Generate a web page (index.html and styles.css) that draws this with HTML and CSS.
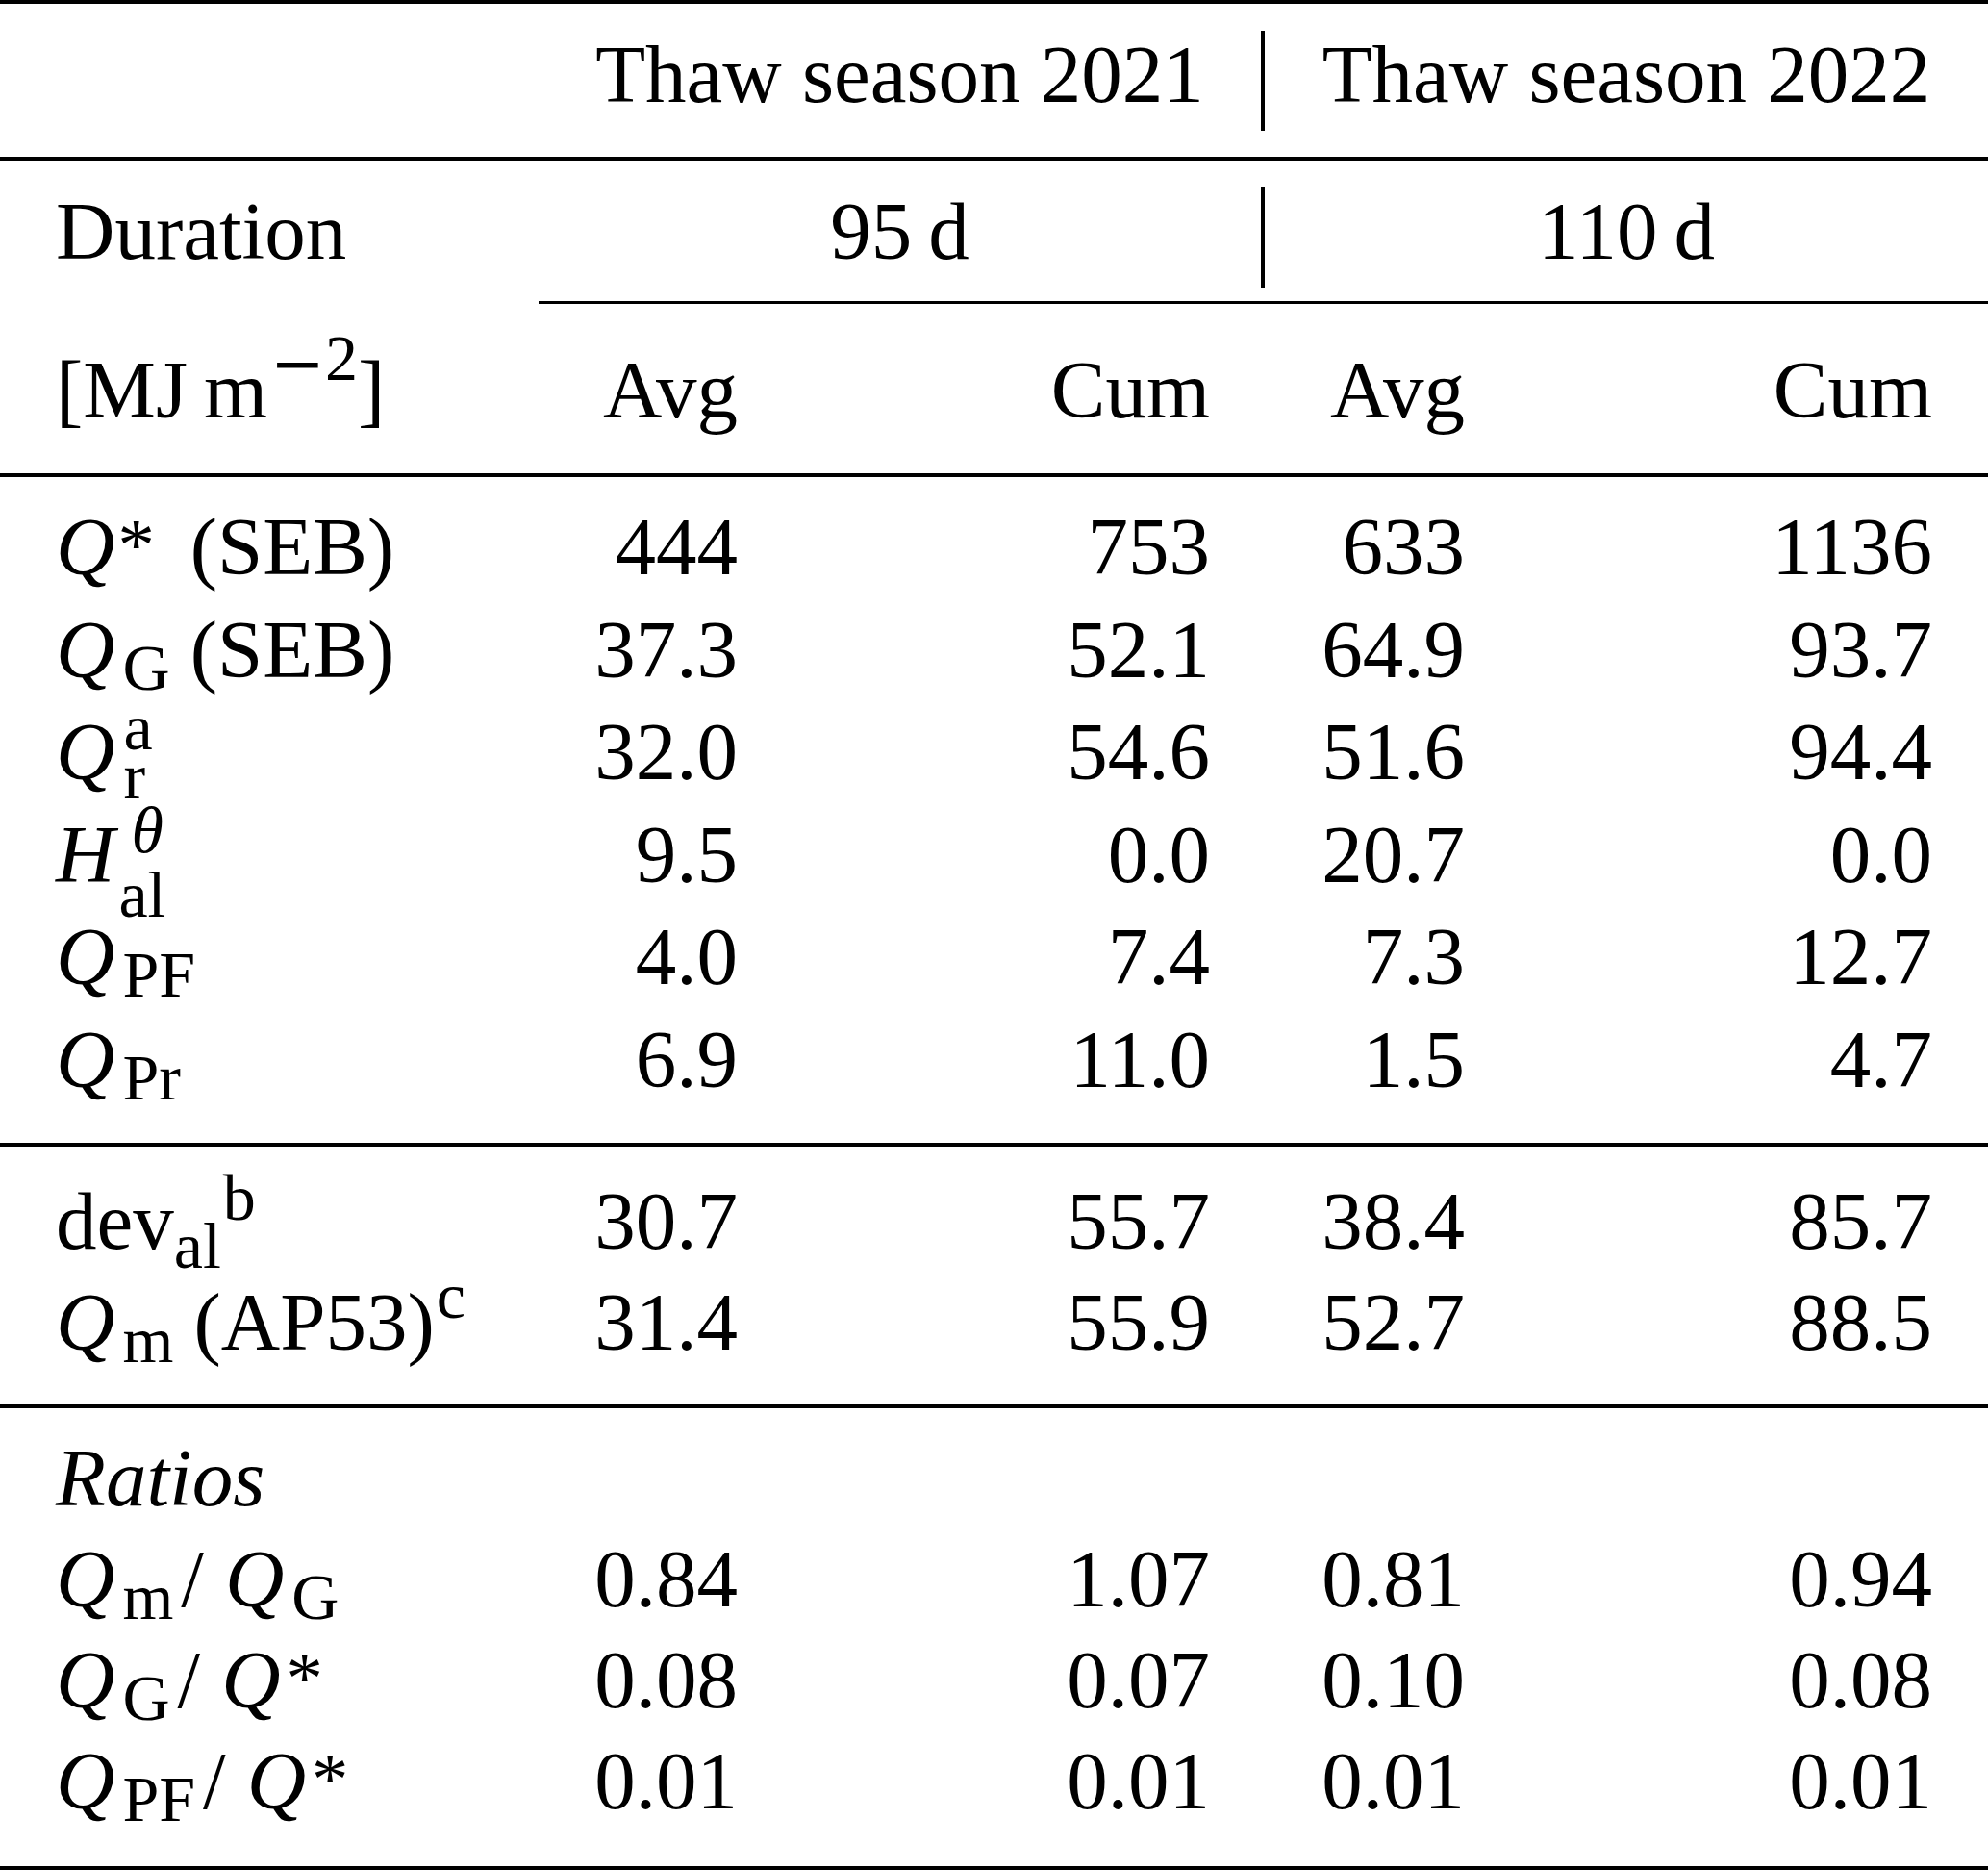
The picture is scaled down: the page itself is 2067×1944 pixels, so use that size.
FILE: index.html
```html
<!DOCTYPE html>
<html lang="en">
<head>
<meta charset="utf-8">
<title>Thaw season energy balance</title>
<link rel="stylesheet" href="styles.css">
</head>
<body>
<div class="tbl">
  <div class="rule"></div>
  <div class="grow hdr">
    <div class="lab"></div>
    <div class="grp">Thaw season 2021</div>
    <div class="vbar"></div>
    <div class="grp">Thaw season 2022</div>
  </div>
  <div class="rule"></div>
  <div class="grow dur">
    <div class="lab">Duration</div>
    <div class="grp">95&thinsp;d</div>
    <div class="vbar"></div>
    <div class="grp">110&thinsp;d</div>
  </div>
  <div class="rule cmid"></div>
  <div class="row units">
    <div class="lab">[MJ&thinsp;m<sup class="unit"><span class="minus">−</span>2</sup>]</div>
    <div class="n1">Avg</div><div class="n2">Cum</div><div class="n3">Avg</div><div class="n4">Cum</div>
  </div>
  <div class="rule"></div>

  <div class="sec s1">
    <div class="row">
      <div class="lab"><i class="m">Q</i><span class="ast">*</span>(SEB)</div>
      <div class="n1">444</div><div class="n2">753</div><div class="n3">633</div><div class="n4">1136</div>
    </div>
    <div class="row">
      <div class="lab"><i class="m">Q</i><sub class="aq">G</sub> (SEB)</div>
      <div class="n1">37.3</div><div class="n2">52.1</div><div class="n3">64.9</div><div class="n4">93.7</div>
    </div>
    <div class="row">
      <div class="lab"><i class="m">Q</i><span class="scripts sr"><span>a</span><span>r</span></span></div>
      <div class="n1">32.0</div><div class="n2">54.6</div><div class="n3">51.6</div><div class="n4">94.4</div>
    </div>
    <div class="row">
      <div class="lab"><i class="m">H</i><span class="scripts sh"><span class="th">θ</span><span>al</span></span></div>
      <div class="n1">9.5</div><div class="n2">0.0</div><div class="n3">20.7</div><div class="n4">0.0</div>
    </div>
    <div class="row">
      <div class="lab"><i class="m">Q</i><sub class="aq">PF</sub></div>
      <div class="n1">4.0</div><div class="n2">7.4</div><div class="n3">7.3</div><div class="n4">12.7</div>
    </div>
    <div class="row">
      <div class="lab"><i class="m">Q</i><sub class="aq">Pr</sub></div>
      <div class="n1">6.9</div><div class="n2">11.0</div><div class="n3">1.5</div><div class="n4">4.7</div>
    </div>
  </div>
  <div class="rule"></div>

  <div class="sec s2">
    <div class="row">
      <div class="lab">dev<sub class="lo2">al</sub><sup class="lo-sup">b</sup></div>
      <div class="n1">30.7</div><div class="n2">55.7</div><div class="n3">38.4</div><div class="n4">85.7</div>
    </div>
    <div class="row">
      <div class="lab"><i class="m">Q</i><sub class="aq">m</sub> (AP53)<sup>c</sup></div>
      <div class="n1">31.4</div><div class="n2">55.9</div><div class="n3">52.7</div><div class="n4">88.5</div>
    </div>
  </div>
  <div class="rule"></div>

  <div class="sec s3">
    <div class="row">
      <div class="lab"><i class="m">Ratios</i></div>
      <div class="n1"></div><div class="n2"></div><div class="n3"></div><div class="n4"></div>
    </div>
    <div class="row">
      <div class="lab"><i class="m">Q</i><sub class="aq">m</sub><span class="sl">/</span><i class="m">Q</i><sub class="aq">G</sub></div>
      <div class="n1">0.84</div><div class="n2">1.07</div><div class="n3">0.81</div><div class="n4">0.94</div>
    </div>
    <div class="row">
      <div class="lab"><i class="m">Q</i><sub class="aq">G</sub><span class="sl">/</span><i class="m">Q</i><span class="ast end">*</span></div>
      <div class="n1">0.08</div><div class="n2">0.07</div><div class="n3">0.10</div><div class="n4">0.08</div>
    </div>
    <div class="row">
      <div class="lab"><i class="m">Q</i><sub class="aq">PF</sub><span class="sl">/</span><i class="m">Q</i><span class="ast end">*</span></div>
      <div class="n1">0.01</div><div class="n2">0.01</div><div class="n3">0.01</div><div class="n4">0.01</div>
    </div>
  </div>
  <div class="rule"></div>
</div>
</body>
</html>
```

FILE: styles.css
```css
* {
  box-sizing: border-box;
}

html,
body {
  margin: 0;
  padding: 0;
  background: #ffffff;
}

body {
  width: 2067px;
  height: 1944px;
  overflow: hidden;
  font-family: "Liberation Serif", "Times New Roman", Times, serif;
  font-size: 85px;
  color: #000000;
}

.tbl {
  width: 2067px;
}

/* horizontal rules */
.rule {
  height: 4px;
  background: #000000;
}

.rule.cmid {
  height: 3px;
  margin-left: 560px;
}

/* group header rows */
.grow {
  display: grid;
  grid-template-columns: 560px 751px 4px 752px;
  line-height: 106px;
  padding-top: 20px;
  white-space: nowrap;
}

.hdr {
  height: 159px;
}

.dur {
  height: 146px;
}

.grp {
  text-align: center;
}

.vbar {
  background: #000000;
}

.hdr .vbar {
  margin: 8px 0 27px;
}

.dur .vbar {
  margin: 7px 0 14px;
}

/* data rows */
.row {
  display: grid;
  grid-template-columns: 560px 256px 498px 256px 497px;
  white-space: nowrap;
}

.lab {
  padding-left: 58px;
  text-align: left;
}

.n1,
.n2,
.n3,
.n4 {
  text-align: right;
}

.n1 {
  padding-right: 49px;
}

.n2 {
  padding-right: 56px;
}

.n3 {
  padding-right: 47px;
}

.n4 {
  padding-right: 58px;
}

.units {
  height: 176px;
  padding-top: 36px;
  line-height: 106px;
}

.s1 {
  height: 692px;
  padding-top: 19px;
}

.s1 .row {
  height: 106.6px;
  line-height: 106.6px;
}

.s2 {
  height: 268px;
  padding-top: 25px;
}

.s3 {
  height: 476px;
  padding-top: 20px;
}

.s2 .row,
.s3 .row {
  height: 105px;
  line-height: 105px;
}

/* math typesetting */
.m {
  font-style: italic;
}

sub,
sup {
  font-size: 0.8em;
  line-height: 0;
  font-style: normal;
}

sub {
  vertical-align: -13px;
}

sup {
  vertical-align: 33px;
  margin-left: 2px;
}

.aq {
  margin-left: 8px;
}

.lo2 {
  vertical-align: -20px;
}

.lo-sup {
  vertical-align: 30px;
}

/* stacked super/subscripts */
.scripts {
  display: inline-flex;
  flex-direction: column;
  font-size: 0.8em;
  line-height: 40px;
  vertical-align: 31px;
}

.scripts.sr {
  row-gap: 11px;
  margin-left: 9px;
}

.scripts.sh {
  row-gap: 27px;
  margin-left: 4px;
}

.scripts .th {
  font-style: italic;
  padding-left: 13px;
}

.unit {
  vertical-align: 39px;
  margin-left: 3px;
}

.minus {
  font-family: "DejaVu Sans", sans-serif;
  vertical-align: -6px;
  line-height: 0;
}

.ast {
  font-size: 0.9em;
  line-height: 0;
  vertical-align: 5px;
  margin-left: 3px;
  margin-right: 37px;
}

.ast.end {
  margin-left: 6px;
  margin-right: 0;
}

.sl {
  margin-left: 8px;
  margin-right: 22px;
}
```
